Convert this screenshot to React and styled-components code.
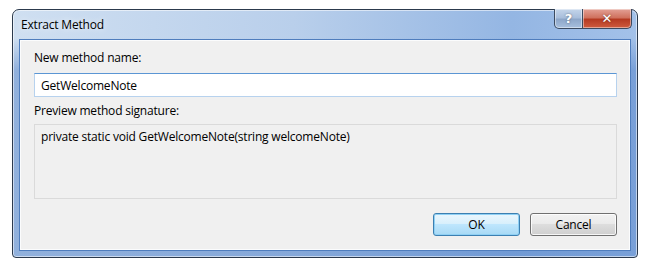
import styled, { createGlobalStyle } from 'styled-components';

const Global = createGlobalStyle`
  html, body {
    margin: 0;
    padding: 0;
    background: #ffffff;
  }
  body {
    font-family: 'Open Sans', 'Noto Sans', sans-serif;
    font-size: 12px;
    letter-spacing: -0.2px;
    color: #000;
  }
`;

const Page = styled.div`
  width: 650px;
  height: 272px;
  padding: 9px 0 0 12px;
  box-sizing: border-box;
`;

const Window = styled.div`
  width: 626px;
  height: 249px;
  box-sizing: border-box;
  border: 1px solid #2c3a4d;
  border-radius: 7px 7px 4px 4px;
  background:
    linear-gradient(180deg, rgba(255, 255, 255, 0) 28px, rgba(70, 120, 195, 0.45) 60px),
    linear-gradient(90deg, #cfdff1 0%, #b9cfeb 45%, #94b6e3 80%, #a3c1e9 100%);
  box-shadow: inset 0 0 0 1px rgba(255, 255, 255, 0.55);
  display: flex;
  flex-direction: column;
  padding: 0 6px 6px 6px;
`;

const TitleBar = styled.div`
  height: 30px;
  display: flex;
  justify-content: space-between;
  align-items: flex-start;
`;

const Title = styled.div`
  padding: 7px 0 0 2px;
  font-size: 12px;
  line-height: 16px;
  color: #000;
  text-shadow: 0 0 6px rgba(255, 255, 255, 0.9);
`;

const CaptionButtons = styled.div`
  display: flex;
  margin-top: -1px;
  margin-right: -1px;
`;

const CaptionButton = styled.div`
  width: ${p => p.$w}px;
  height: 20px;
  box-sizing: border-box;
  border: 1px solid #3b4a60;
  border-top: none;
  display: flex;
  align-items: center;
  justify-content: center;
  color: #fff;
  font-family: 'DejaVu Sans', sans-serif;
  font-weight: bold;
  font-size: 13px;
  letter-spacing: 0;
  background: ${p => p.$close
    ? 'linear-gradient(180deg, #e3a196 0%, #d0725f 45%, #b53a22 55%, #cf5b3e 100%)'
    : 'linear-gradient(180deg, #c4d5ea 0%, #a9bfdc 45%, #8ea7c9 55%, #a7bfdd 100%)'};
  border-radius: ${p => p.$close ? '0 0 5px 0' : '0 0 0 5px'};
  border-left: ${p => p.$close ? 'none' : '1px solid #3b4a60'};
  box-shadow: inset 0 0 0 1px rgba(255, 255, 255, 0.45);
  text-shadow: 0 0 2px rgba(0, 0, 0, 0.5);
`;

const Client = styled.div`
  flex: 1;
  background: #f0f0f0;
  border: 1px solid #fbfcfd;
  outline: 1px solid #4f7dbd;
  margin: 0 1px 1px 1px;
  display: flex;
  flex-direction: column;
  padding: 8px 12px 0 13px;
`;

const Label = styled.div`
  line-height: 17px;
  margin-top: ${p => p.$top || 0}px;
`;

const TextBox = styled.div`
  margin-top: 7px;
  height: 24px;
  box-sizing: border-box;
  background: #fff;
  border: 1px solid #b7d2ee;
  border-top-color: #5b96d4;
  padding: 0 6px;
  display: flex;
  align-items: center;
`;

const Preview = styled.div`
  margin-top: 5px;
  height: 75px;
  box-sizing: border-box;
  border: 1px solid #dadada;
  padding: 4px 6px;
  line-height: 16px;
`;

const Footer = styled.div`
  margin-top: 14px;
  display: flex;
  justify-content: flex-end;
  gap: 10px;
`;

const Button = styled.div`
  width: 87px;
  height: 23px;
  box-sizing: border-box;
  border-radius: 3px;
  border: 1px solid ${p => p.$default ? '#3c7fb1' : '#707070'};
  background: ${p => p.$default
    ? 'linear-gradient(180deg, #eaf6fd 0%, #d9f0fc 45%, #bee6fd 50%, #a7d9f5 100%)'
    : 'linear-gradient(180deg, #f2f2f2 0%, #ebebeb 45%, #dddddd 50%, #cfcfcf 100%)'};
  box-shadow: ${p => p.$default
    ? 'inset 0 0 0 1px #8fd0f4'
    : 'inset 0 0 0 1px rgba(255, 255, 255, 0.8)'};
  display: flex;
  align-items: center;
  justify-content: center;
`;

export default function App() {
  return (
    <>
      <Global />
      <Page>
        <Window>
          <TitleBar>
            <Title>Extract Method</Title>
            <CaptionButtons>
              <CaptionButton $w={29}>?</CaptionButton>
              <CaptionButton $w={49} $close>✕</CaptionButton>
            </CaptionButtons>
          </TitleBar>
          <Client>
            <Label>New method name:</Label>
            <TextBox>GetWelcomeNote</TextBox>
            <Label $top={5}>Preview method signature:</Label>
            <Preview>private static void GetWelcomeNote(string welcomeNote)</Preview>
            <Footer>
              <Button $default>OK</Button>
              <Button>Cancel</Button>
            </Footer>
          </Client>
        </Window>
      </Page>
    </>
  );
}
